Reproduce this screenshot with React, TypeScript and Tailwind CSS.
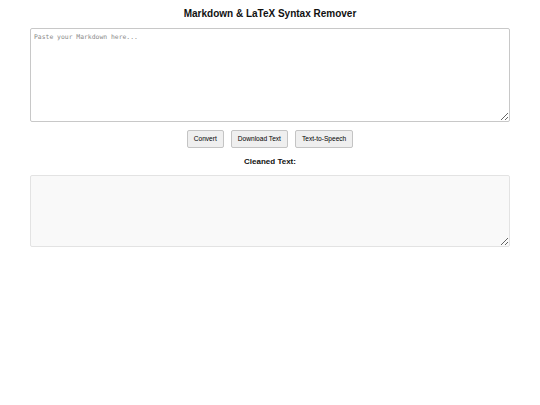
import React, { useState } from 'react';

const font = { fontFamily: '"Liberation Sans", Arial, sans-serif' };

const Btn: React.FC<{ label: string; onClick?: () => void }> = ({ label, onClick }) => (
  <button
    onClick={onClick}
    className="h-[18px] px-[6px] text-[6.6px] leading-none text-black bg-[#efefef] border border-[#c4c4c4] rounded-[2px] hover:bg-[#e5e5e5]"
  >
    {label}
  </button>
);

export default function App() {
  const [input, setInput] = useState('');
  const [output, setOutput] = useState('');

  const convert = () => {
    const cleaned = input
      .replace(/\$\$?([^$]*)\$\$?/g, '$1')
      .replace(/[#*_`>~]/g, '')
      .replace(/\[(.*?)\]\(.*?\)/g, '$1');
    setOutput(cleaned);
  };

  return (
    <div className="min-h-screen bg-white" style={font}>
      <div className="w-[480px] mx-auto pt-[8px]">
        <h1 className="text-[10px] leading-[12px] font-bold text-center text-[#111] mb-[8px]">
          Markdown &amp; LaTeX Syntax Remover
        </h1>
        <textarea
          value={input}
          onChange={e => setInput(e.target.value)}
          placeholder="Paste your Markdown here..."
          className="block w-full h-[94px] border border-[#c8c8c8] rounded-[2px] px-[3px] py-[4px] text-[6.4px] leading-[8px] placeholder:text-[#8a8a8a] outline-none"
          style={{ fontFamily: '"DejaVu Sans Mono", "Liberation Mono", monospace' }}
        />
        <div className="flex justify-center gap-[7px] mt-[8px]">
          <Btn label="Convert" onClick={convert} />
          <Btn label="Download Text" />
          <Btn label="Text-to-Speech" />
        </div>
        <h3 className="text-[8px] leading-[10px] font-bold text-center text-[#111] mt-[9px] mb-[8px]">
          Cleaned Text:
        </h3>
        <textarea
          value={output}
          readOnly
          className="block w-full h-[72px] bg-[#f9f9f9] border border-[#e3e3e3] rounded-[2px] p-[4px] text-[6.67px] outline-none"
        />
      </div>
    </div>
  );
}
